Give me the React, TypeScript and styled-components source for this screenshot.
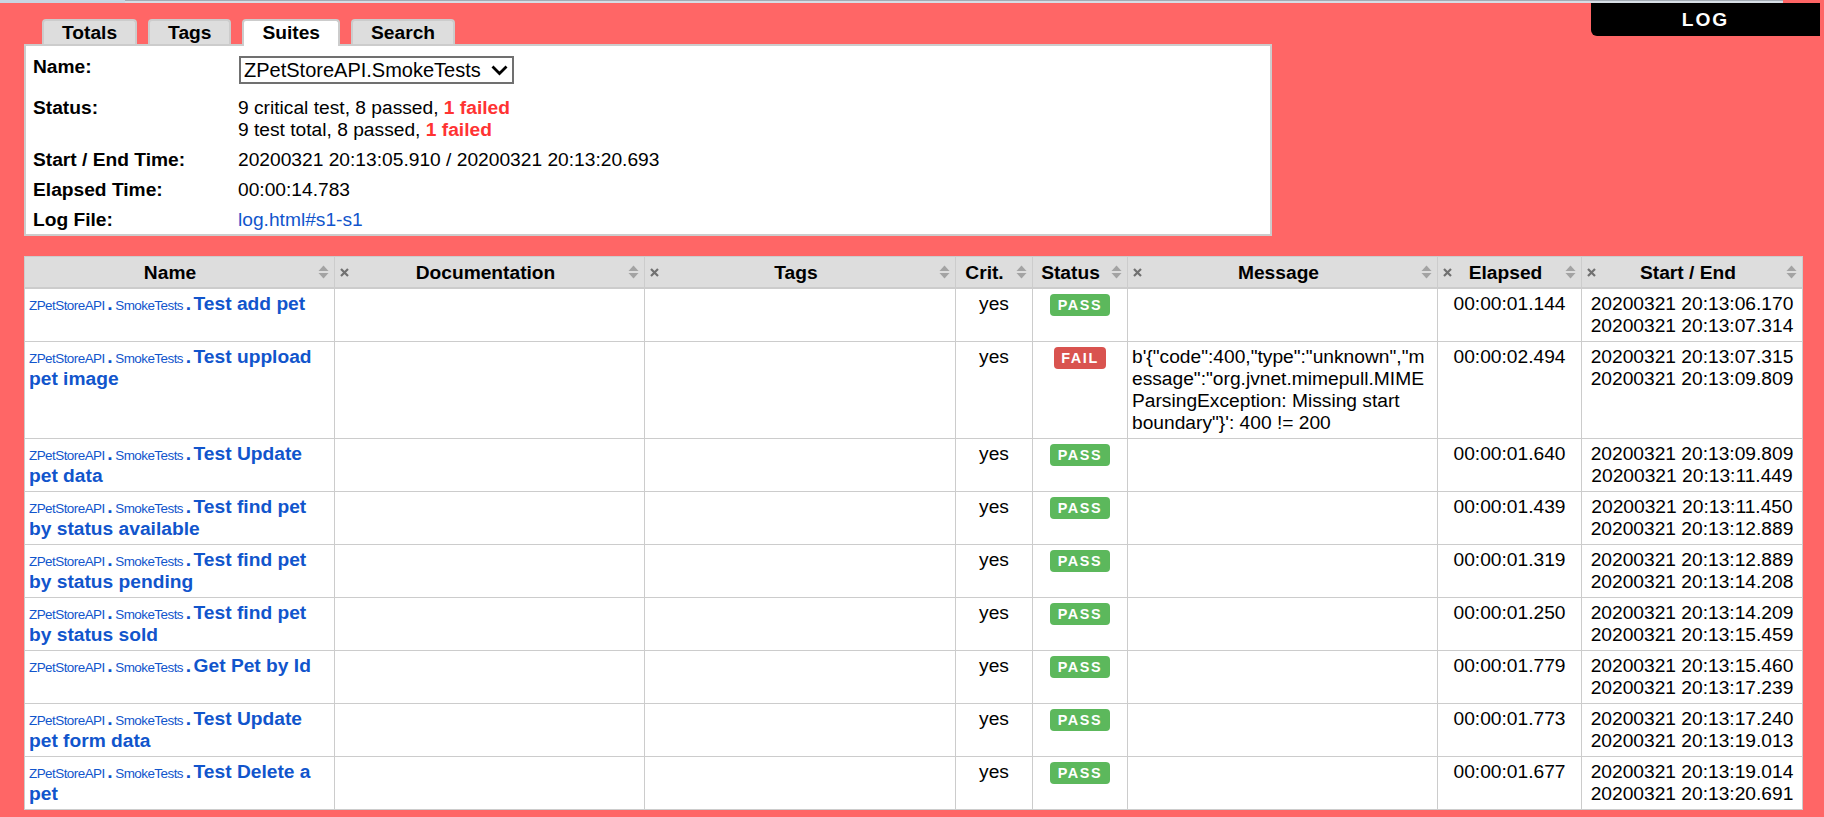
import React from 'react';
import styled, { createGlobalStyle } from 'styled-components';

const GlobalStyle = createGlobalStyle`
  html, body { margin: 0; padding: 0; overflow: hidden; }
  body {
    background: #f66;
    font-family: "Liberation Sans", Arial, Helvetica, sans-serif;
    font-size: 19.2px;
    color: #000;
  }
  a { color: #15c; text-decoration: none; }
`;

const TopStrip = styled.div`
  display: flex;
  height: 3px;
  width: 1783px;
`;

const StripLeft = styled.div`
  width: 125px;
  background: #c9d5e2;
`;

const StripRight = styled.div`
  flex: 1;
  box-sizing: border-box;
  border-top: 1px solid #a3abb4;
  background: #d6dde5;
`;

const Page = styled.div`
  padding: 0 22px 0 24px;
`;

const HeaderRow = styled.div`
  display: flex;
  justify-content: space-between;
  align-items: flex-start;
  margin-right: -18px;
`;

const Tabs = styled.div`
  display: flex;
  align-items: flex-end;
  gap: 11px;
  margin: 16px 0 0 18px;
`;

const Tab = styled.div<{ $active?: boolean }>`
  box-sizing: border-box;
  height: ${(p) => (p.$active ? 27 : 25)}px;
  margin-bottom: ${(p) => (p.$active ? -2 : 0)}px;
  padding: 1px 18px 0;
  border: 2px solid #ccc;
  border-bottom: none;
  border-radius: 4px 4px 0 0;
  background: ${(p) => (p.$active ? '#fff' : '#ddd')};
  font-weight: bold;
  line-height: 22px;
  position: relative;
  z-index: ${(p) => (p.$active ? 1 : 0)};
`;

const LogLink = styled.a`
  && {
    display: block;
    width: 229px;
    padding: 5.5px 0;
    line-height: 22px;
    background: #000;
    color: #fff;
    font-weight: bold;
    letter-spacing: 0.1em;
    text-align: center;
    border-bottom-left-radius: 6px;
  }
`;

const SummaryBox = styled.div`
  box-sizing: border-box;
  width: 1248px;
  background: #fff;
  border: 2px solid #ccc;
  padding: 10px 7px 3px;
  display: grid;
  grid-template-columns: 205px 1fr;
  row-gap: 8px;
  line-height: 22px;
`;

const Label = styled.div`
  font-weight: bold;
`;

const Value = styled.div``;

const SelectWrap = styled.div`
  position: relative;
  display: inline-block;
  margin: 0 0 5px 1px;
`;

const Select = styled.select`
  appearance: none;
  box-sizing: border-box;
  width: 275px;
  height: 28px;
  border: 2px solid #707070;
  border-radius: 0;
  background: #fff;
  color: #000;
  font-family: inherit;
  font-size: 20px;
  padding: 0 0 0 3px;
  margin: 0;
`;

const Chevron = styled.svg`
  position: absolute;
  right: 6px;
  top: 9px;
  pointer-events: none;
`;

const Fail = styled.span`
  color: #f33;
  font-weight: bold;
`;

const Table = styled.table`
  margin-top: 20px;
  width: 1778px;
  border-collapse: collapse;
  table-layout: fixed;
  background: #fff;
`;

const Th = styled.th<{ $closable?: boolean }>`
  position: relative;
  background: #ddd;
  border: 1px solid #ccc;
  border-bottom: 2px solid #ccc;
  padding: 5px 23px 3px ${(p) => (p.$closable ? 15 : 4)}px;
  font-weight: bold;
  text-align: center;
  white-space: nowrap;
  line-height: normal;
`;

const CloseIcon = styled.svg`
  position: absolute;
  left: 5px;
  top: 50%;
  margin-top: -4.5px;
`;

const SortIcon = styled.svg`
  position: absolute;
  right: 5px;
  top: 50%;
  margin-top: -7px;
`;

const Td = styled.td<{ $align?: 'left' | 'center' }>`
  border: 1px solid #ccc;
  padding: 4px;
  vertical-align: top;
  text-align: ${(p) => p.$align ?? 'left'};
  line-height: normal;
  overflow-wrap: anywhere;
`;

const Parent = styled.a`
  font-size: 13.44px;
  letter-spacing: -0.04em;
`;

const Sep = styled.span`
  font-weight: bold;
  color: #15c;
  margin: 0 2.6px;
`;

const TestName = styled.a`
  font-weight: bold;
`;

const Badge = styled.span<{ $fail?: boolean }>`
  display: inline;
  padding: 3px 7.5px;
  border-radius: 4px;
  font-size: 14.4px;
  font-weight: bold;
  letter-spacing: 1.6px;
  color: #fff;
  background: ${(p) => (p.$fail ? '#d9534f' : '#5cb85c')};
`;

type Row = {
  name: string;
  status: 'PASS' | 'FAIL';
  message?: string;
  elapsed: string;
  start: string;
  end: string;
};

const rows: Row[] = [
  { name: 'Test add pet', status: 'PASS', elapsed: '00:00:01.144', start: '20200321 20:13:06.170', end: '20200321 20:13:07.314' },
  {
    name: 'Test uppload pet image',
    status: 'FAIL',
    message:
      'b\'{"code":400,"type":"unknown","message":"org.jvnet.mimepull.MIMEParsingException: Missing start boundary"}\': 400 != 200',
    elapsed: '00:00:02.494',
    start: '20200321 20:13:07.315',
    end: '20200321 20:13:09.809',
  },
  { name: 'Test Update pet data', status: 'PASS', elapsed: '00:00:01.640', start: '20200321 20:13:09.809', end: '20200321 20:13:11.449' },
  { name: 'Test find pet by status available', status: 'PASS', elapsed: '00:00:01.439', start: '20200321 20:13:11.450', end: '20200321 20:13:12.889' },
  { name: 'Test find pet by status pending', status: 'PASS', elapsed: '00:00:01.319', start: '20200321 20:13:12.889', end: '20200321 20:13:14.208' },
  { name: 'Test find pet by status sold', status: 'PASS', elapsed: '00:00:01.250', start: '20200321 20:13:14.209', end: '20200321 20:13:15.459' },
  { name: 'Get Pet by Id', status: 'PASS', elapsed: '00:00:01.779', start: '20200321 20:13:15.460', end: '20200321 20:13:17.239' },
  { name: 'Test Update pet form data', status: 'PASS', elapsed: '00:00:01.773', start: '20200321 20:13:17.240', end: '20200321 20:13:19.013' },
  { name: 'Test Delete a pet', status: 'PASS', elapsed: '00:00:01.677', start: '20200321 20:13:19.014', end: '20200321 20:13:20.691' },
];

const columns: { title: string; width: number; closable: boolean }[] = [
  { title: 'Name', width: 310, closable: false },
  { title: 'Documentation', width: 310, closable: true },
  { title: 'Tags', width: 311, closable: true },
  { title: 'Crit.', width: 77, closable: false },
  { title: 'Status', width: 95, closable: false },
  { title: 'Message', width: 310, closable: true },
  { title: 'Elapsed', width: 144, closable: true },
  { title: 'Start / End', width: 221, closable: true },
];

const Close = () => (
  <CloseIcon width="9" height="9" viewBox="0 0 9 9">
    <path d="M1 1 L8 8 M8 1 L1 8" stroke="#707070" strokeWidth="2.2" />
  </CloseIcon>
);

const Sort = () => (
  <SortIcon width="11" height="14" viewBox="0 0 11 14">
    <polygon points="0.5,6 5.5,0.5 10.5,6" fill="#a3a3a3" />
    <polygon points="0.5,8 5.5,13.5 10.5,8" fill="#a3a3a3" />
  </SortIcon>
);

export default function App() {
  return (
    <>
      <GlobalStyle />
      <TopStrip>
        <StripLeft />
        <StripRight />
      </TopStrip>
      <Page>
        <HeaderRow>
          <Tabs>
            <Tab>Totals</Tab>
            <Tab>Tags</Tab>
            <Tab $active>Suites</Tab>
            <Tab>Search</Tab>
          </Tabs>
          <LogLink href="#">LOG</LogLink>
        </HeaderRow>
        <SummaryBox>
          <Label>Name:</Label>
          <Value>
            <SelectWrap>
              <Select defaultValue="s1">
                <option value="s1">ZPetStoreAPI.SmokeTests</option>
              </Select>
              <Chevron width="17" height="11" viewBox="0 0 17 11">
                <polyline points="1.5,1.5 8.5,8.5 15.5,1.5" fill="none" stroke="#000" strokeWidth="2.8" />
              </Chevron>
            </SelectWrap>
          </Value>
          <Label>Status:</Label>
          <Value>
            9 critical test, 8 passed, <Fail>1 failed</Fail>
            <br />
            9 test total, 8 passed, <Fail>1 failed</Fail>
          </Value>
          <Label>Start / End Time:</Label>
          <Value>20200321 20:13:05.910 / 20200321 20:13:20.693</Value>
          <Label>Elapsed Time:</Label>
          <Value>00:00:14.783</Value>
          <Label>Log File:</Label>
          <Value>
            <a href="#">log.html#s1-s1</a>
          </Value>
        </SummaryBox>
        <Table>
          <colgroup>
            {columns.map((c) => (
              <col key={c.title} style={{ width: c.width }} />
            ))}
          </colgroup>
          <thead>
            <tr>
              {columns.map((c) => (
                <Th key={c.title} $closable={c.closable}>
                  {c.closable && <Close />}
                  {c.title}
                  <Sort />
                </Th>
              ))}
            </tr>
          </thead>
          <tbody>
            {rows.map((r) => (
              <tr key={r.name}>
                <Td>
                  <Parent href="#">ZPetStoreAPI</Parent>
                  <Sep>.</Sep>
                  <Parent href="#">SmokeTests</Parent>
                  <Sep>.</Sep>
                  <TestName href="#">{r.name}</TestName>
                </Td>
                <Td />
                <Td />
                <Td $align="center">yes</Td>
                <Td $align="center">
                  <Badge $fail={r.status === 'FAIL'}>{r.status}</Badge>
                </Td>
                <Td>{r.message ?? ''}</Td>
                <Td $align="center">{r.elapsed}</Td>
                <Td $align="center">
                  {r.start}
                  <br />
                  {r.end}
                </Td>
              </tr>
            ))}
          </tbody>
        </Table>
      </Page>
    </>
  );
}
